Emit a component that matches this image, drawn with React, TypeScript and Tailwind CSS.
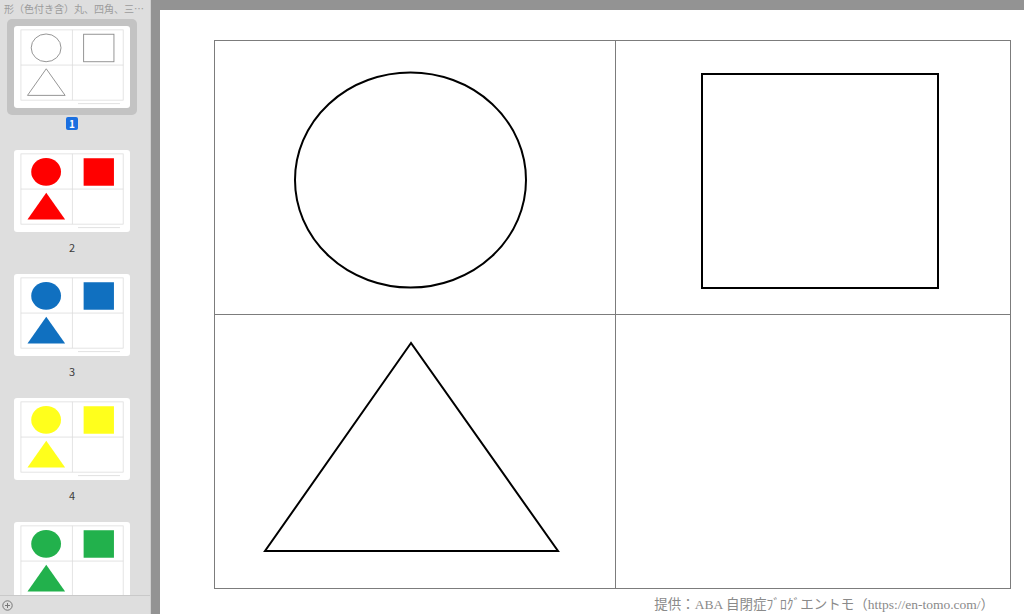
import React from 'react'

const slides = [
  { n: 1, fill: 'none', stroke: '#8a8a8a' },
  { n: 2, fill: '#ff0000', stroke: 'none' },
  { n: 3, fill: '#1070c0', stroke: 'none' },
  { n: 4, fill: '#ffff1c', stroke: 'none' },
  { n: 5, fill: '#22b14c', stroke: 'none' },
]

// miniature of the slide, drawn in page coordinates (903 x 638)
function Thumb({ fill, stroke }: { fill: string; stroke: string }) {
  const sw = stroke === 'none' ? 0 : 7
  return (
    <svg viewBox="0 0 903 638" className="w-[116px] h-[82px] block">
      <rect x="0" y="0" width="903" height="638" fill="#fff" />
      <g stroke="#dcdcdc" strokeWidth="6" fill="none">
        <rect x="54" y="30" width="796" height="547" />
        <line x1="455" y1="30" x2="455" y2="577" />
        <line x1="54" y1="304" x2="850" y2="304" />
      </g>
      <ellipse cx="250" cy="170" rx="116" ry="108" fill={fill} stroke={stroke} strokeWidth={sw} />
      <rect x="542" y="64" width="236" height="214" fill={fill} stroke={stroke} strokeWidth={sw} />
      <polygon points="251,333 105,540 398,540" fill={fill} stroke={stroke} strokeWidth={sw} />
      <rect x="498" y="600" width="327" height="8" fill="#e2e2e2" />
    </svg>
  )
}

export default function App() {
  return (
    <div className="w-[1024px] h-[614px] flex overflow-hidden bg-[#939393]" style={{ fontFamily: '"Noto Sans CJK JP", "Noto Sans", sans-serif' }}>
      <aside className="w-[151px] h-full flex flex-col bg-[#dedede] border-r border-[#cfcfcf] flex-shrink-0">
        <div className="h-[19px] pl-[4px] pt-[2px] text-[10px] leading-[14px] text-[#9c9c9c] whitespace-nowrap overflow-hidden">
          形（色付き含）丸、四角、三…
        </div>
        <div className="flex-1 overflow-hidden pl-[7px]">
          {slides.map((s) => (
            <div key={s.n} className="w-[130px] h-[124px] flex flex-col items-center">
              <div className={`w-[130px] h-[96px] p-[7px] rounded-[5px] ${s.n === 1 ? 'bg-[#c3c3c3]' : ''}`}>
                <div className="rounded-[3px] overflow-hidden">
                  <Thumb fill={s.fill} stroke={s.stroke} />
                </div>
              </div>
              <div className="h-[28px] flex items-start pt-[2px]">
                {s.n === 1 ? (
                  <span className="block px-[3px] h-[13px] rounded-[2px] bg-[#1b6fe0] text-white text-[10px] leading-[13px] font-semibold">1</span>
                ) : (
                  <span className="block h-[13px] text-[11px] leading-[13px] text-[#3c3c3c]">{s.n < 5 ? s.n : ''}</span>
                )}
              </div>
            </div>
          ))}
        </div>
        <div className="h-[19px] border-t border-[#c9c9c9] flex items-center pl-[2px]">
          <svg width="11" height="11" viewBox="0 0 11 11">
            <circle cx="5.5" cy="5.5" r="4.7" fill="none" stroke="#777" strokeWidth="1" />
            <path d="M5.5 3v5M3 5.5h5" stroke="#777" strokeWidth="1" />
          </svg>
        </div>
      </aside>

      <main className="flex-1 pl-[9px] pt-[10px]">
        <div className="h-full bg-white pl-[54px] pt-[30px]">
          <div className="w-[797px] grid grid-cols-[401px_395px] grid-rows-[274px_273px] border border-[#7c7c7c]">
            <div className="border-r border-b border-[#7c7c7c]">
              <svg width="400" height="273" className="block">
                <ellipse cx="195.5" cy="139" rx="115.5" ry="107.5" fill="none" stroke="#000" strokeWidth="2" />
              </svg>
            </div>
            <div className="border-b border-[#7c7c7c]">
              <svg width="395" height="273" className="block">
                <rect x="86" y="33" width="236" height="214" fill="none" stroke="#000" strokeWidth="2" />
              </svg>
            </div>
            <div className="border-r border-[#7c7c7c]">
              <svg width="400" height="272" className="block">
                <polygon points="196,28 50,236 343,236" fill="none" stroke="#000" strokeWidth="2" strokeLinejoin="miter" />
              </svg>
            </div>
            <div />
          </div>
          <div className="w-[797px] flex justify-end pr-[17px] pt-[8px]">
            <span className="text-[13.5px] leading-[16px] text-[#8a8a8a] whitespace-nowrap" style={{ fontFamily: '"Liberation Serif", "Noto Sans CJK JP", serif' }}>
              提供：ABA 自閉症ﾌﾞﾛｸﾞエントモ（https://en-tomo.com/）
            </span>
          </div>
        </div>
      </main>
    </div>
  )
}
